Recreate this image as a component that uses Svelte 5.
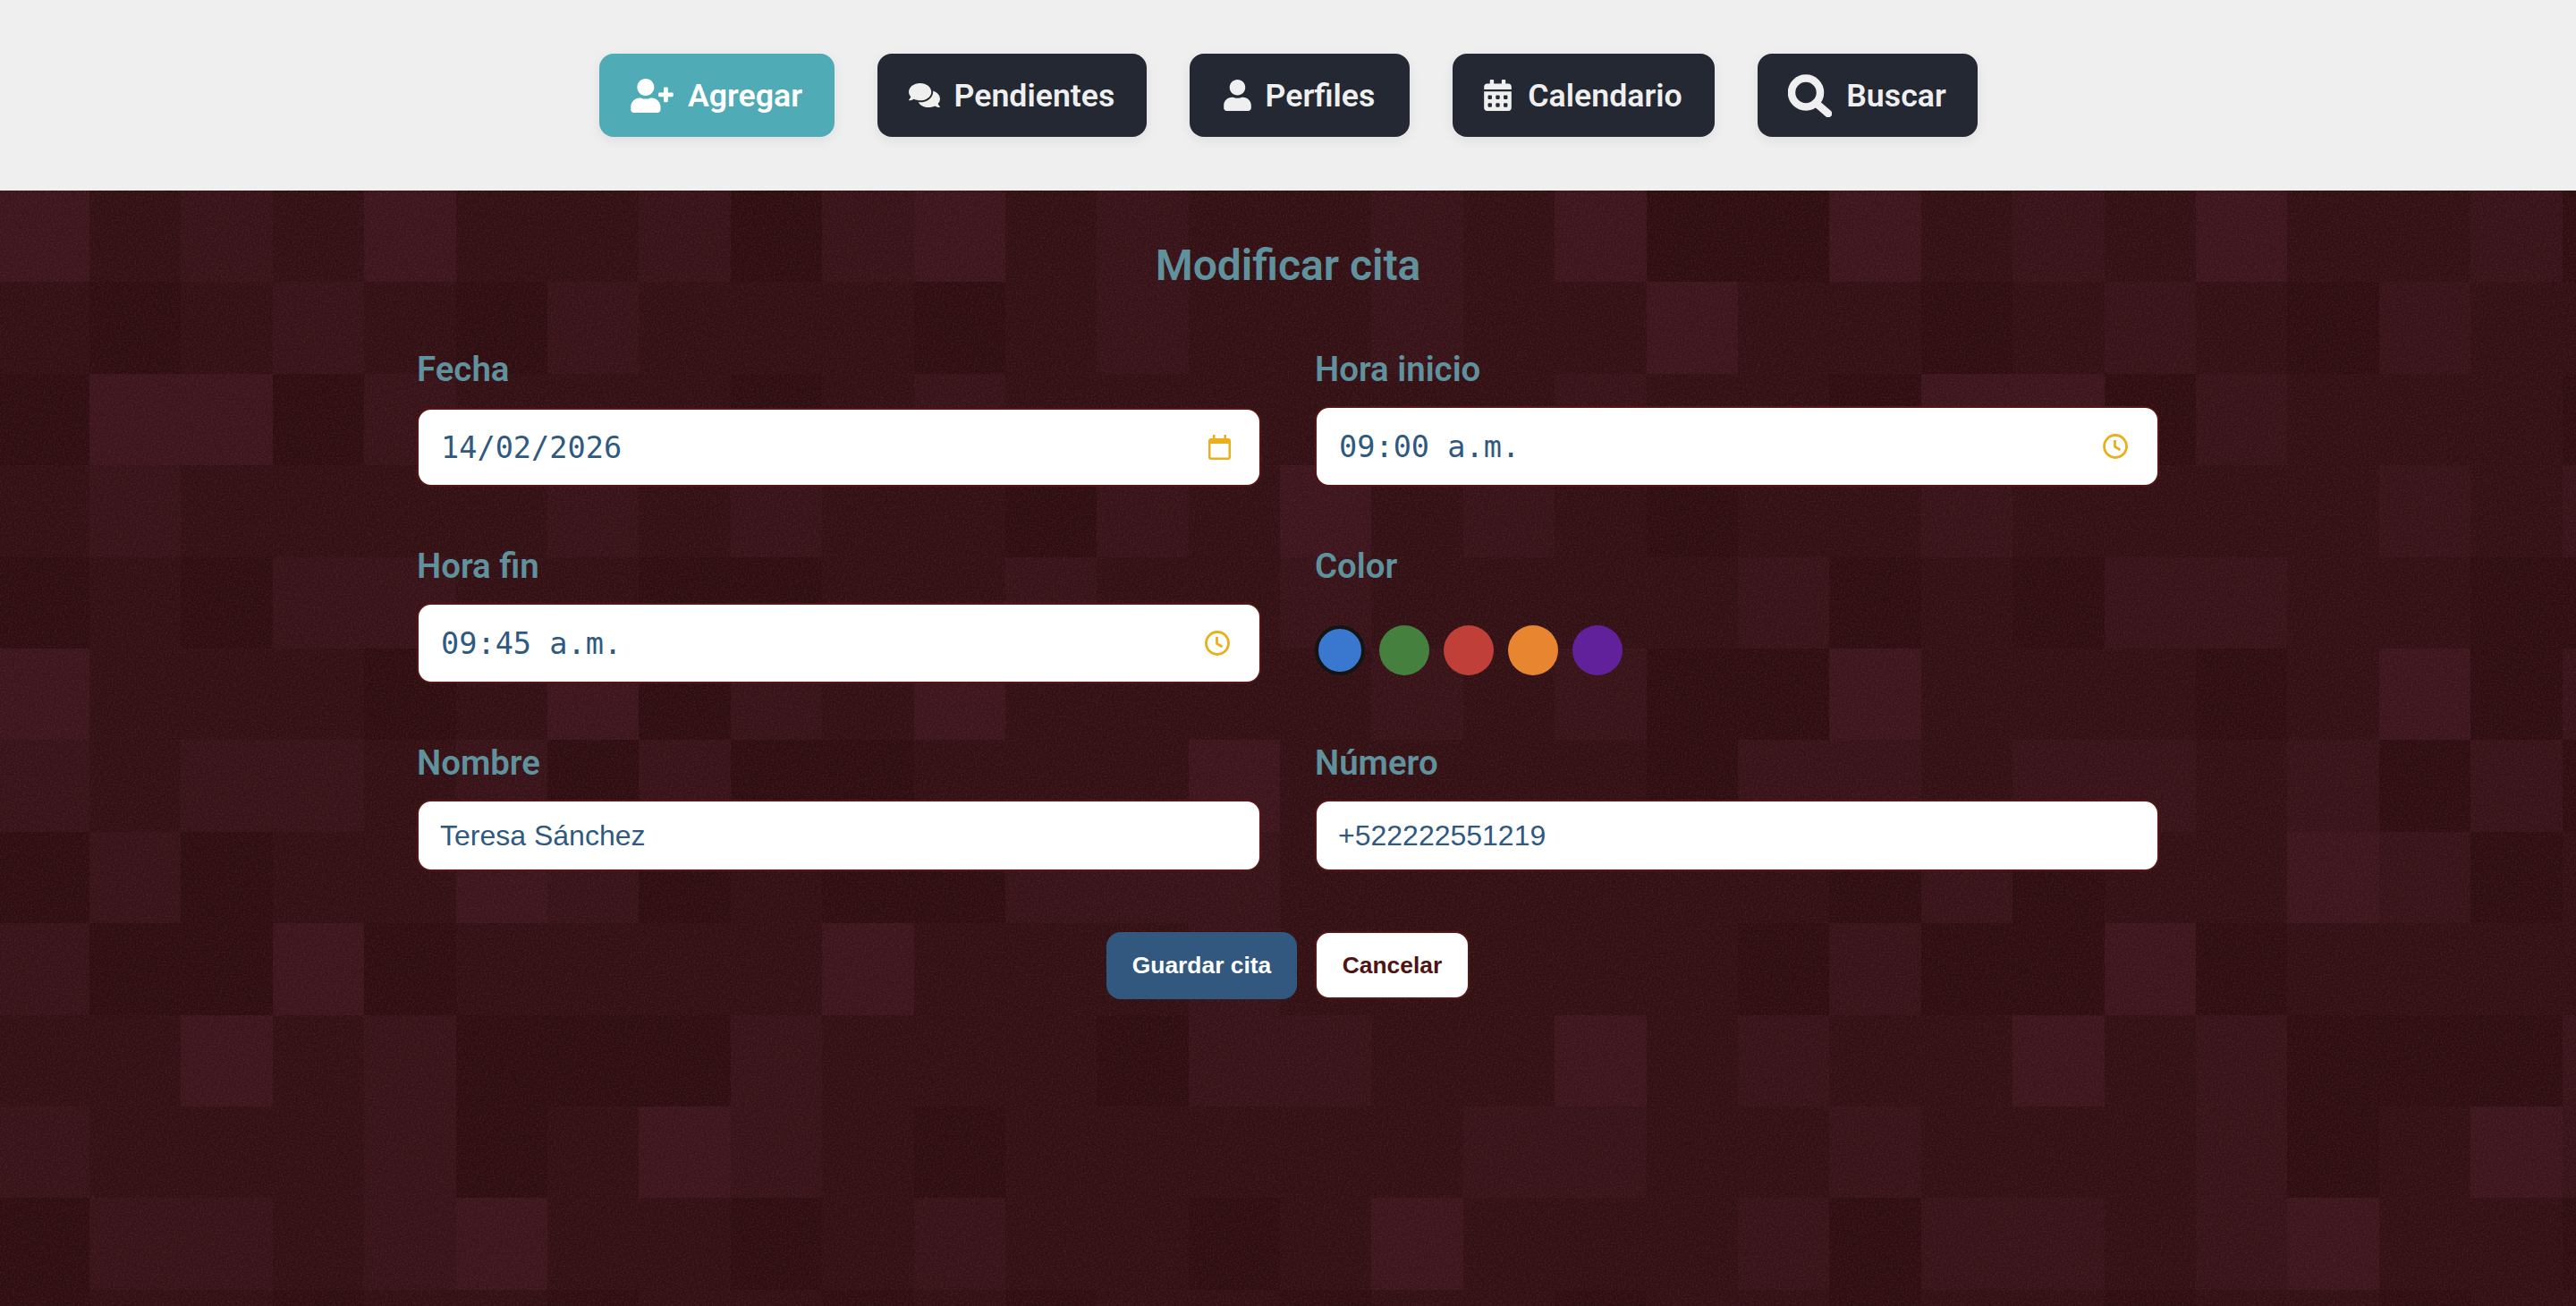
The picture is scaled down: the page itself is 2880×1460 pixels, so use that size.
<script>
  const tile = [
    '31213112023121121300',
    '10121021110121121131',
    '03302111012111111211',
    '12111121211021312101',
    '01022110011211211112',
    '31110130213111121200',
    '21221202001113111102',
    '02011320100222111111',
    '20030111131112111110',
    '11312000211102211312',
    '21112013210111112211',
    '02212311012110131112',
    '01101101101011011011'
  ];
  const cells = [];
  for (let r = 0; r < 13; r++) {
    for (let c = 0; c < 29; c++) {
      cells.push(tile[r][c % 20]);
    }
  }
  const swatches = ['blue', 'green', 'red', 'orange', 'purple'];
</script>

<header class="top">
  <button class="nav add active">
    <svg class="i-plus" viewBox="0 0 640 512"><path d="M624 208h-64v-64c0-8.800-7.200-16-16-16h-32c-8.800 0-16 7.200-16 16v64h-64c-8.800 0-16 7.200-16 16v32c0 8.800 7.200 16 16 16h64v64c0 8.800 7.200 16 16 16h32c8.800 0 16-7.200 16-16v-64h64c8.800 0 16-7.200 16-16v-32c0-8.800-7.200-16-16-16zm-400 48c70.700 0 128-57.300 128-128S294.700 0 224 0 96 57.300 96 128s57.300 128 128 128zm89.600 32h-16.700c-22.200 10.200-46.900 16-72.900 16s-50.600-5.800-72.900-16h-16.700C60.200 288 0 348.200 0 422.400V464c0 26.500 21.500 48 48 48h352c26.500 0 48-21.500 48-48v-41.600c0-74.200-60.200-134.400-134.400-134.400z"/></svg>
    Agregar
  </button>
  <button class="nav pending">
    <svg class="i-comments" viewBox="0 0 576 512"><path d="M416 192c0-88.400-93.100-160-208-160S0 103.600 0 192c0 34.300 14.100 65.900 38 92-13.400 30.200-35.500 54.200-35.800 54.500-2.200 2.300-2.800 5.700-1.500 8.700S4.800 352 8 352c36.600 0 66.900-12.300 88.700-25 32.200 15.700 70.300 25 111.300 25 114.900 0 208-71.600 208-160zm122 220c23.900-26 38-57.700 38-92 0-66.900-53.500-124.200-129.300-148.100.9 6.600 1.300 13.300 1.300 20.100 0 105.900-107.700 192-240 192-10.800 0-21.300-.8-31.700-1.900C207.800 439.600 281.800 480 368 480c41 0 79.100-9.200 111.300-25 21.800 12.700 52.100 25 88.700 25 3.200 0 6.100-1.900 7.300-4.800 1.300-2.900.7-6.300-1.500-8.700-.3-.3-22.400-24.200-35.800-54.500z"/></svg>
    Pendientes
  </button>
  <button class="nav profiles">
    <svg class="i-tall" viewBox="0 0 448 512"><path d="M224 256c70.700 0 128-57.300 128-128S294.700 0 224 0 96 57.300 96 128s57.300 128 128 128zm89.600 32h-16.700c-22.200 10.200-46.900 16-72.900 16s-50.600-5.800-72.900-16h-16.700C60.200 288 0 348.200 0 422.400V464c0 26.500 21.500 48 48 48h352c26.500 0 48-21.500 48-48v-41.600c0-74.200-60.200-134.400-134.400-134.400z"/></svg>
    Perfiles
  </button>
  <button class="nav agenda">
    <svg class="i-tall" viewBox="0 0 448 512"><path d="M0 464c0 26.500 21.500 48 48 48h352c26.500 0 48-21.500 48-48V192H0v272zm320-196c0-6.600 5.400-12 12-12h40c6.600 0 12 5.400 12 12v40c0 6.600-5.400 12-12 12h-40c-6.600 0-12-5.400-12-12v-40zm0 128c0-6.600 5.400-12 12-12h40c6.600 0 12 5.400 12 12v40c0 6.600-5.400 12-12 12h-40c-6.600 0-12-5.400-12-12v-40zM192 268c0-6.600 5.400-12 12-12h40c6.600 0 12 5.400 12 12v40c0 6.600-5.400 12-12 12h-40c-6.600 0-12-5.400-12-12v-40zm0 128c0-6.600 5.400-12 12-12h40c6.600 0 12 5.400 12 12v40c0 6.600-5.400 12-12 12h-40c-6.600 0-12-5.400-12-12v-40zM64 268c0-6.600 5.400-12 12-12h40c6.600 0 12 5.400 12 12v40c0 6.600-5.400 12-12 12H76c-6.600 0-12-5.400-12-12v-40zm0 128c0-6.600 5.400-12 12-12h40c6.600 0 12 5.400 12 12v40c0 6.600-5.400 12-12 12H76c-6.600 0-12-5.400-12-12v-40zM400 64h-48V16c0-8.800-7.200-16-16-16h-32c-8.800 0-16 7.200-16 16v48H160V16c0-8.800-7.200-16-16-16h-32c-8.800 0-16 7.200-16 16v48H48C21.500 64 0 85.500 0 112v48h448v-48c0-26.500-21.500-48-48-48z"/></svg>
    Calendario
  </button>
  <button class="nav find">
    <svg class="i-search" viewBox="0 0 49 48">
      <circle cx="20" cy="20.500" r="16" />
      <line x1="31" y1="32" x2="45" y2="44" />
    </svg>
    Buscar
  </button>
</header>

<main class="page">
  <div class="tiles" aria-hidden="true">
    {#each cells as c}
      <span class="cell l{c}"></span>
    {/each}
  </div>
  <svg class="noise" aria-hidden="true">
    <filter id="grain">
      <feTurbulence type="fractalNoise" baseFrequency="0.55" numOctaves="2" seed="4" />
      <feColorMatrix type="matrix" values="0 0 0 0 0.4  0 0 0 0 0.14  0 0 0 0 0.18  0 0 0 1.6 -0.62" />
    </filter>
    <rect width="100%" height="100%" filter="url(#grain)" />
  </svg>

  <div class="content">
    <h1>Modificar cita</h1>
    <form class="grid" onsubmit={(e) => e.preventDefault()}>
      <div class="group">
        <span class="label">Fecha</span>
        <div class="field date mono">
          14/02/2026
          <svg class="pick" viewBox="0 0 25 28">
            <path d="M5 0h2.500v4h10V0H20v4h2a3 3 0 0 1 3 3v18a3 3 0 0 1-3 3H3a3 3 0 0 1-3-3V7a3 3 0 0 1 3-3h2zM2.500 10v15.500h20V10z" />
          </svg>
        </div>
      </div>
      <div class="group">
        <span class="label">Hora inicio</span>
        <div class="field mono">
          09:00 a.m.
          <svg class="pick clock" viewBox="0 0 28 28">
            <circle cx="14" cy="14" r="12.500" /><path d="M13.500 7v7.500l6 3.500" />
          </svg>
        </div>
      </div>
      <div class="group">
        <span class="label">Hora fin</span>
        <div class="field mono">
          09:45 a.m.
          <svg class="pick clock" viewBox="0 0 28 28">
            <circle cx="14" cy="14" r="12.500" /><path d="M13.500 7v7.500l6 3.500" />
          </svg>
        </div>
      </div>
      <div class="group">
        <span class="label">Color</span>
        <div class="swatches">
          {#each swatches as s, i}
            <span class="swatch {s}" class:selected={i === 0}></span>
          {/each}
        </div>
      </div>
      <div class="group">
        <span class="label">Nombre</span>
        <div class="field plain">Teresa Sánchez</div>
      </div>
      <div class="group">
        <span class="label">Número</span>
        <div class="field plain">+522222551219</div>
      </div>
    </form>
    <div class="actions">
      <button class="save">Guardar cita</button>
      <button class="cancel">Cancelar</button>
    </div>
  </div>
</main>

<style>
  :global(body) {
    margin: 0;
    background: #2f1014;
    font-family: Roboto, "Liberation Sans", sans-serif;
  }
  .top {
    height: 213px;
    box-sizing: border-box;
    padding-top: 60px;
    background: #efefef;
    display: flex;
    justify-content: center;
    align-items: flex-start;
    gap: 48px;
  }
  .nav {
    height: 93px;
    padding: 0;
    border: 0;
    border-radius: 16px;
    display: flex;
    align-items: center;
    justify-content: center;
    gap: 16px;
    background: #232832;
    color: #efefef;
    font: 600 35.700px Roboto, sans-serif;
    box-shadow: 0 4px 14px rgba(0, 0, 0, 0.07);
  }
  .add { width: 263px; }
  .pending { width: 301px; }
  .profiles { width: 246px; }
  .agenda { width: 293px; gap: 18px; }
  .find { width: 246px; }
  .nav.active {
    background: #4fabb5;
    color: #fff;
  }
  .nav svg {
    fill: currentColor;
    flex: none;
  }
  .i-plus {
    width: 48px;
    height: 38px;
  }
  .i-comments {
    width: 35px;
    height: 31px;
  }
  .i-tall {
    width: 31px;
    height: 35px;
  }
  .nav .i-search {
    width: 49px;
    height: 48px;
    fill: none;
    stroke: currentColor;
    stroke-width: 8.500;
    stroke-linecap: round;
  }
  .page {
    position: relative;
    height: 1247px;
    overflow: hidden;
  }
  .tiles {
    position: absolute;
    top: 0;
    left: -2.400px;
    display: grid;
    grid-template-columns: repeat(29, 102.400px);
    grid-auto-rows: 102.400px;
  }
  .l0 { background: #2d0d10; }
  .l1 { background: #311014; }
  .l2 { background: #361318; }
  .l3 { background: #3c151c; }
  .noise {
    position: absolute;
    inset: 0;
    width: 100%;
    height: 100%;
    opacity: 0.22;
  }
  .content {
    position: relative;
    padding-top: 57px;
  }
  h1 {
    margin: 0;
    height: 54px;
    text-align: center;
    color: #5f929d;
    font: 600 48px/54px Roboto, sans-serif;
  }
  .grid {
    width: 1948px;
    margin: 68px auto 0;
    display: grid;
    grid-template-columns: 1fr 1fr;
    column-gap: 60px;
    row-gap: 68px;
    align-items: start;
  }
  .group {
    display: flex;
    flex-direction: column;
  }
  .label {
    height: 42px;
    line-height: 42px;
    margin-bottom: 20px;
    color: #5f929d;
    font-size: 38.400px;
    font-weight: 600;
  }
  .field {
    box-sizing: border-box;
    height: 90px;
    padding: 0 25px;
    display: flex;
    align-items: center;
    justify-content: space-between;
    background: #fff;
    border: 2px solid #551616;
    border-radius: 16px;
    color: #30597f;
  }
  .field.date {
    height: 88px;
    margin-top: 2px;
  }
  .field.plain {
    height: 80px;
    padding: 0 24px;
    font: 32px "Liberation Sans", sans-serif;
  }
  .mono {
    font: 33.600px "DejaVu Sans Mono", monospace;
    white-space: pre;
  }
  .pick {
    width: 25px;
    height: 28px;
    margin-right: 7px;
    fill: #e9b01c;
    fill-rule: evenodd;
  }
  .pick.clock {
    width: 28px;
    height: 28px;
    margin-right: 8px;
    fill: none;
    stroke: #e9b01c;
    stroke-width: 2.800;
  }
  .swatches {
    display: flex;
    gap: 16px;
    margin-top: 25px;
  }
  .swatch {
    box-sizing: border-box;
    width: 56px;
    height: 56px;
    border-radius: 50%;
  }
  .swatch.selected {
    border: 4px solid #141414;
  }
  .blue { background: #3a78d0; }
  .green { background: #46803f; }
  .red { background: #c03f38; }
  .orange { background: #e88530; }
  .purple { background: #61219a; }
  .actions {
    margin-top: 67px;
    display: flex;
    justify-content: center;
    align-items: center;
    gap: 20px;
  }
  .actions button {
    box-sizing: border-box;
    font: 700 26.400px "Liberation Sans", sans-serif;
  }
  .save {
    width: 213px;
    height: 75px;
    border: 0;
    border-radius: 16px;
    background: #32587f;
    color: #fff;
  }
  .cancel {
    width: 173px;
    height: 76px;
    border: 2px solid #551616;
    border-radius: 16px;
    background: #fff;
    color: #4e1414;
  }
</style>
